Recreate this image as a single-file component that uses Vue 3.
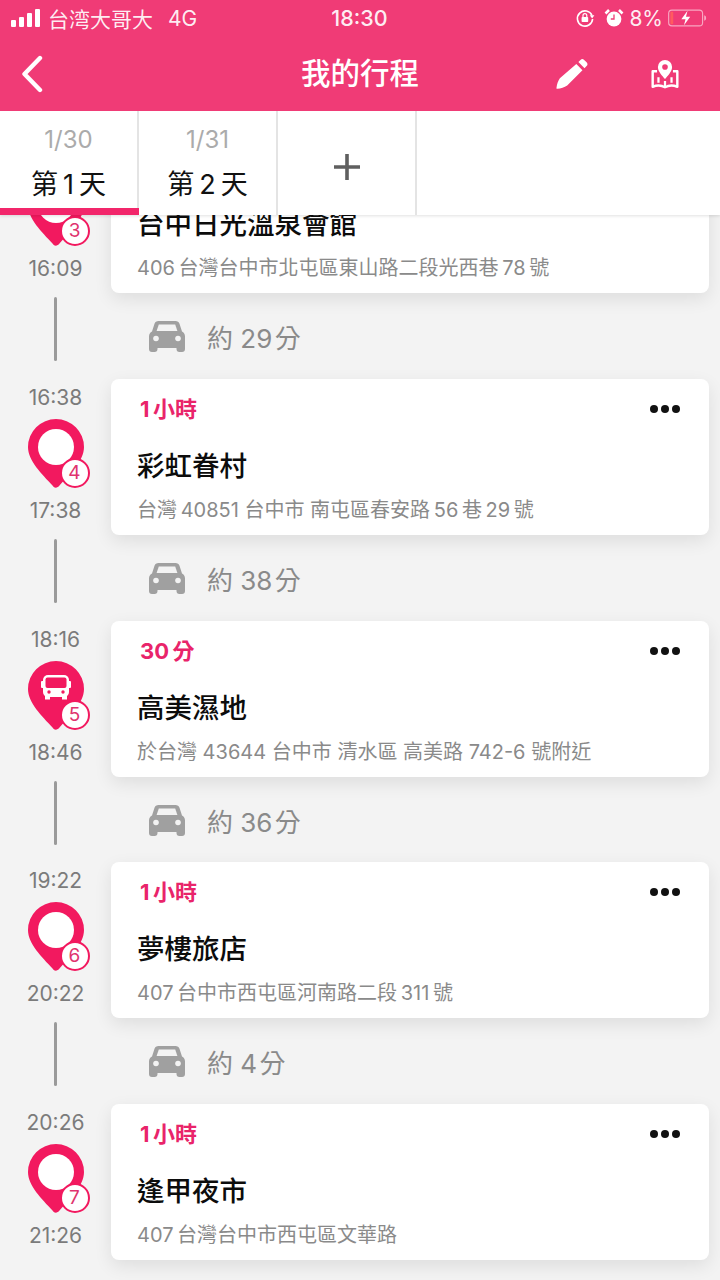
<script setup>
const stops = [
  { id: 3, start: '', end: '16:09', dur: '', title: '台中日光溫泉會館', addr: '406\u2009台灣台中市北屯區東山路二段光西巷\u200978\u2009號', drive: '約 29\u200a分' },
  { id: 4, start: '16:38', end: '17:38', dur: '1\u2009小時', title: '彩虹眷村', addr: '台灣\u200940851 台中市 南屯區春安路\u200956\u2009巷\u200929\u2009號', drive: '約 38\u200a分' },
  { id: 5, start: '18:16', end: '18:46', dur: '30\u2009分', title: '高美濕地', addr: '於台灣 43644 台中市 清水區 高美路 742-6 號附近', drive: '約 36\u200a分', bus: true },
  { id: 6, start: '19:22', end: '20:22', dur: '1\u2009小時', title: '夢樓旅店', addr: '407\u2009台中市西屯區河南路二段\u2009311\u2009號', drive: '約 4\u200a分' },
  { id: 7, start: '20:26', end: '21:26', dur: '1\u2009小時', title: '逢甲夜市', addr: '407\u2009台灣台中市西屯區文華路', drive: '' }
]
</script>

<template>
  <div class="page">
    <header class="head">
      <div class="status">
        <div class="status-left">
          <span class="signal"><i class="b1"></i><i class="b2"></i><i class="b3"></i><i class="b4"></i></span>
          <span>台湾大哥大</span>
          <span class="net">4G</span>
        </div>
        <div class="clock">18:30</div>
        <div class="status-right">
          <svg width="20" height="20" viewBox="0 0 20 20" fill="none">
            <path d="M17 7.5A7.6 7.6 0 1 0 17.6 11" stroke="#fff" stroke-width="1.6"/>
            <path d="M14.8 7.2 19.4 7.2 17.1 10.6Z" fill="#fff"/>
            <rect x="6.6" y="9" width="6.6" height="5" rx=".8" fill="#fff"/>
            <path d="M8 9V7.6a1.9 1.9 0 0 1 3.8 0V9" stroke="#fff" stroke-width="1.2"/>
          </svg>
          <svg class="alarm" width="20" height="20" viewBox="0 0 20 20" fill="none">
            <circle cx="10" cy="11" r="7.4" fill="#fff"/>
            <path d="M10 6.5V11H6.8" stroke="#f03b76" stroke-width="1.3"/>
            <path d="M1.5 5.5 5 2M18.5 5.5 15 2" stroke="#fff" stroke-width="2.6"/>
          </svg>
          <span class="pct">8%</span>
          <svg width="40" height="20" viewBox="0 0 42 20" fill="none">
            <rect x=".7" y="1.7" width="35.6" height="16.6" rx="3.4" stroke="#fff" stroke-opacity=".55" stroke-width="1.2"/>
            <rect x="2.5" y="3.5" width="3" height="13" rx="1" fill="#ff5a5f"/>
            <path d="M38 7.2c1.6.4 2 1.4 2 2.8s-.4 2.400-2 2.800Z" fill="#fff" fill-opacity=".55"/>
            <path d="M20.500 2.500 14 11.200h4.400L16.800 17.500l6.500-8.900h-4.400Z" fill="#fff"/>
          </svg>
        </div>
      </div>
      <nav class="nav">
        <svg class="back" width="24" height="38" viewBox="0 0 24 38" fill="none">
          <path d="M20 3 4.500 19 20 35" stroke="#fff" stroke-width="4.400" stroke-linecap="round" stroke-linejoin="round"/>
        </svg>
        <h1>我的行程</h1>
        <div class="nav-actions">
          <svg width="32" height="32" viewBox="0 0 34 32">
            <path d="M23.800 3.300 26 1.100a2.800 2.800 0 0 1 3.900 0l2.600 2.500a2.800 2.800 0 0 1 0 3.900l-2.200 2.300ZM21.600 5.500 28.100 12 11.900 28.200c-2.900 2-6.800 3.200-10.500 3.600-.7 0-1-.3-.9-.9.400-3.700 1.600-7.500 3.600-10.400Z" fill="#fff"/>
          </svg>
          <svg width="28" height="31" viewBox="0 0 30 32" fill="none">
            <path d="M15 1.500a7.600 7.600 0 0 0-7.600 7.600c0 4.800 5 9.900 7.600 12.900 2.600-3 7.600-8.100 7.600-12.900A7.600 7.600 0 0 0 15 1.500Z" fill="#fff"/>
            <circle cx="15" cy="9" r="3" fill="#f03b76"/>
            <path d="M6.500 13.500H1.800v16.700c4.600-1.800 9-1.800 13.200.5 4.200-2.300 8.600-2.300 13.200-.5V13.500h-4.700" stroke="#fff" stroke-width="2.600" stroke-linejoin="round"/>
            <path d="M8 20v6M22 20v6M15 24v6" stroke="#fff" stroke-width="2.400"/>
          </svg>
        </div>
      </nav>
    </header>

    <div class="tabs">
      <div class="tab active"><span class="date">1/30</span><span class="day">第&#8201;1&#8201;天</span></div>
      <div class="tab"><span class="date">1/31</span><span class="day">第&#8201;2&#8201;天</span></div>
      <div class="tab add">
        <svg width="26" height="26" viewBox="0 0 26 26"><path d="M13 0v26M0 13h26" stroke="#5f5f5f" stroke-width="3.600"/></svg>
      </div>
      <div class="tab-rest"></div>
    </div>

    <main class="list">
      <section v-for="s in stops" :key="s.id" class="stop">
        <div class="row">
          <div class="side">
            <span class="time">{{ s.start }}</span>
            <div class="pin">
              <svg width="56" height="70" viewBox="0 0 56 70">
                <path d="M28 0a28 28 0 0 1 28 28c0 14-14 27-24.500 38.500-2 2.300-4.700 3.500-7 0C14 55 0 42 0 28A28 28 0 0 1 28 0Z" fill="#f2195f"/>
                <circle v-if="!s.bus" cx="28" cy="28" r="18" fill="#fff"/>
                <g v-else>
                  <rect x="15" y="14" width="26" height="22" rx="5" fill="#fff"/>
                  <rect x="13" y="20" width="3" height="7" rx="1" fill="#fff"/>
                  <rect x="40" y="20" width="3" height="7" rx="1" fill="#fff"/>
                  <rect x="17.500" y="16.500" width="21" height="10.500" rx="2" fill="#f2195f"/>
                  <circle cx="21" cy="31" r="1.700" fill="#f2195f"/>
                  <circle cx="35" cy="31" r="1.700" fill="#f2195f"/>
                  <path d="M17 35h5v3.500h-5zM34 35h5v3.500h-5z" fill="#fff"/>
                </g>
              </svg>
              <span class="badge">{{ s.id }}</span>
            </div>
            <span class="time">{{ s.end }}</span>
          </div>
          <article class="card">
            <div class="card-top">
              <span class="dur">{{ s.dur }}</span>
              <span class="dots"><i></i><i></i><i></i></span>
            </div>
            <h2>{{ s.title }}</h2>
            <p>{{ s.addr }}</p>
          </article>
        </div>
        <div v-if="s.drive" class="drive">
          <div class="line-col"><span class="line"></span></div>
          <div class="drive-info">
            <svg width="36" height="31" viewBox="0 0 36 31">
              <path d="M9.500 0h17c2 0 3.400 1 4 2.800L33 10.500c1.800 1 3 2.500 3 5V28a3 3 0 0 1-3 3h-2.500a3 3 0 0 1-3-3v-1h-19v1a3 3 0 0 1-3 3H3a3 3 0 0 1-3-3V15.500c0-2.500 1.200-4 3-5l2.500-7.700C6.100 1 7.500 0 9.500 0Z" fill="#a0a0a0"/>
              <path d="M9.800 3.500h16.400l2.200 6.500H7.600Z" fill="#f3f3f3"/>
              <circle cx="7" cy="17.500" r="2.800" fill="#f3f3f3"/>
              <circle cx="29" cy="17.500" r="2.800" fill="#f3f3f3"/>
            </svg>
            <span>{{ s.drive }}</span>
          </div>
        </div>
      </section>
    </main>
  </div>
</template>

<style>
html, body { margin: 0; background: #f3f3f3; }
</style>

<style scoped>
.page {
  width: 720px;
  height: 1280px;
  overflow: hidden;
  background: #f3f3f3;
  font-family: Inter, "Noto Sans CJK TC", sans-serif;
  display: flex;
  flex-direction: column;
}
.head {
  background: #f03b76;
  color: #fff;
  height: 111px;
  flex: none;
  position: relative;
  z-index: 3;
}
.status {
  height: 36px;
  display: grid;
  grid-template-columns: 1fr auto 1fr;
  align-items: center;
  padding: 0 12px 0 11px;
  font-size: 21px;
  color: rgba(255, 255, 255, .92);
}
.status-left { display: flex; align-items: center; gap: 7px; }
.signal { display: flex; align-items: flex-end; gap: 3px; height: 18px; margin-right: 1px; }
.signal i { width: 5px; background: #fff; border-radius: 1px; display: block; }
.b1 { height: 7px; } .b2 { height: 10px; } .b3 { height: 14px; } .b4 { height: 18px; }
.net { margin-left: 8px; font-size: 21px; }
.clock { font-size: 21.500px; font-weight: 500; }
.status-right { display: flex; justify-content: flex-end; align-items: center; gap: 5px; }
.alarm { margin-left: 4px; }
.pct { font-size: 21px; }
.nav {
  height: 75px;
  display: flex;
  align-items: center;
  position: relative;
  padding: 0 41px 3px 20px;
  justify-content: space-between;
}
.nav h1 {
  position: absolute;
  left: 0;
  right: 0;
  top: 17px;
  margin: 0;
  text-align: center;
  font-size: 29.500px;
  line-height: 40px;
  font-weight: 500;
  pointer-events: none;
}
.nav-actions { display: flex; align-items: center; gap: 63px; }
.tabs {
  height: 104px;
  flex: none;
  display: flex;
  background: #fff;
  position: relative;
  z-index: 2;
  box-shadow: 0 1px 3px rgba(0, 0, 0, .12);
}
.tab {
  width: 139px;
  flex: none;
  border-right: 2px solid #e4e4e4;
  box-sizing: border-box;
  display: flex;
  flex-direction: column;
  align-items: center;
  position: relative;
}
.date { color: #ababab; font-size: 24px; line-height: 30px; margin-top: 14px; }
.day { color: #111; font-size: 27px; line-height: 36px; margin-top: 12px; }
.tab.active::after {
  content: "";
  position: absolute;
  left: 0;
  right: -2px;
  bottom: 0;
  height: 7px;
  background: #f2266b;
}
.add { justify-content: center; padding-top: 8px; }
.tab-rest { flex: 1; }
.list {
  margin-top: -78px;
  position: relative;
  z-index: 1;
  flex: none;
}
.stop { display: block; }
.row { display: flex; height: 156px; }
.side {
  width: 111px;
  flex: none;
  display: flex;
  flex-direction: column;
  align-items: center;
  box-sizing: border-box;
  padding: 7px 0 0 0;
}
.time { height: 24px; font-size: 21px; line-height: 24px; color: #7b7b7b; }
.pin { position: relative; width: 56px; height: 70px; margin: 9px 0 10px; }
.pin svg { display: block; }
.badge {
  position: absolute;
  left: 32px;
  top: 39px;
  width: 30px;
  height: 30px;
  box-sizing: border-box;
  border: 2px solid #f2195f;
  border-radius: 50%;
  background: #fff;
  color: #e0336f;
  font-size: 19px;
  line-height: 26px;
  text-align: center;
}
.card {
  width: 598px;
  height: 156px;
  box-sizing: border-box;
  background: #fff;
  border-radius: 8px;
  padding: 16px 29px 0 26px;
  box-shadow: 0 6px 18px rgba(0, 0, 0, .09);
}
.card-top { display: flex; justify-content: space-between; align-items: center; height: 30px; }
.dur { color: #e9246a; font-size: 22px; font-weight: 700; line-height: 28px; margin: -2px 0 0 3px; }
.dots { display: flex; gap: 3px; margin-top: -2px; }
.dots i { width: 8px; height: 8px; border-radius: 50%; background: #111; display: block; }
.card h2 {
  margin: 22px 0 0;
  font-size: 27.500px;
  line-height: 38px;
  font-weight: 500;
  color: #0c0c0c;
}
.card p {
  margin: 11px 0 0;
  font-size: 20px;
  line-height: 28px;
  color: #8a8a8a;
  white-space: nowrap;
}
.drive { height: 85.750px; display: flex; }
.line-col { width: 111px; flex: none; padding: 4px 1px 0 0; box-sizing: border-box; display: flex; justify-content: center; }
.line { width: 3px; height: 64px; border-radius: 2px; background: #9a9a9a; display: block; }
.drive-info {
  display: flex;
  align-items: center;
  gap: 22px;
  margin-left: 38px;
  height: 87px;
  color: #8a8a8a;
  font-size: 26px;
}
</style>
